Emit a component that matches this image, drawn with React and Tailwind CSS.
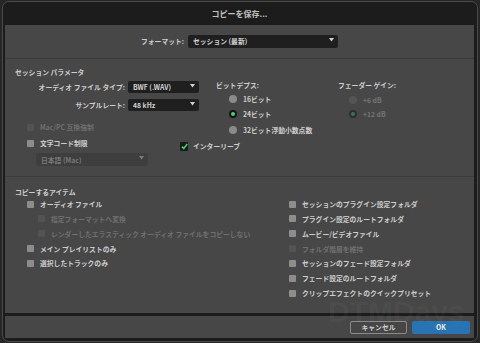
import React from 'react';

function Box({ disabled }) {
  return (
    <span
      className={`block w-[7px] h-[7px] shrink-0 rounded-[1px] ${
        disabled ? 'bg-[#535353]' : 'bg-[#8d8d8d]'
      }`}
    />
  );
}

function CheckItem({ label, disabled, indent }) {
  return (
    <div className={`flex items-center gap-[6px] h-[10px] ${indent ? 'pl-[11px]' : ''}`}>
      <Box disabled={disabled} />
      <span className={`whitespace-nowrap ${disabled ? 'text-[#6f6f6f]' : 'text-[#cecece]'}`}>{label}</span>
    </div>
  );
}

function Arrow() {
  return (
    <svg width="5" height="4" viewBox="0 0 5 4" className="shrink-0 -mt-[3px]">
      <path d="M0 0h5L2.5 3.5z" fill="currentColor" />
    </svg>
  );
}

function Select({ value, disabled, className }) {
  return (
    <div
      className={`flex items-center justify-between pl-[5px] pr-[4px] rounded-[2px] ${
        disabled ? 'bg-[#3e3e3e] text-[#7a7a7a]' : 'bg-[#1f1f1f] text-[#d2d2d2]'
      } ${className}`}
    >
      <span className="whitespace-nowrap">{value}</span>
      <Arrow />
    </div>
  );
}

function Radio({ on, disabled }) {
  if (on) {
    return (
      <span
        className={`flex items-center justify-center w-[8px] h-[8px] rounded-full shrink-0 ${
          disabled ? 'bg-[#2b302d]' : 'bg-[#141414]'
        }`}
      >
        <span className={`block w-[4px] h-[4px] rounded-full ${disabled ? 'bg-[#3d7452]' : 'bg-[#45d271]'}`} />
      </span>
    );
  }
  return (
    <span
      className={`block w-[8px] h-[8px] rounded-full shrink-0 ${disabled ? 'bg-[#555555]' : 'bg-[#8a8a8a]'}`}
    />
  );
}

function RadioItem({ label, on, disabled, className }) {
  return (
    <div className={`flex items-center gap-[6px] h-[10px] ${className}`}>
      <Radio on={on} disabled={disabled} />
      <span className={`whitespace-nowrap ${disabled ? 'text-[#747474]' : 'text-[#cecece]'}`}>{label}</span>
    </div>
  );
}

export default function App() {
  return (
    <div className="w-[480px] h-[343px] bg-[#272727] pt-[1px] pb-[1px] px-[2px] font-[family-name:'Noto_Sans_CJK_JP','Liberation_Sans',sans-serif] font-bold text-[6.8px] leading-[10px] text-[#cecece]">
      <div className="relative h-full rounded-[7px] border border-[#4a4a4a] bg-[#1c1c1c] flex flex-col pl-[2px] pr-[3px] pb-[3px] overflow-hidden">
        {/* Title bar */}
        <div className="h-[23px] shrink-0 flex items-center justify-center text-[8px] text-[#c0c0c0]">
          コピーを保存...
        </div>

        {/* Main panel */}
        <div className="flex-1 flex flex-col bg-[#474747]">
          {/* Format */}
          <div className="h-[34px] shrink-0 border-b border-[#3b3b3b] flex items-center justify-center gap-[4px] pb-[1px]">
            <span>フォーマット:</span>
            <Select value="セッション (最新)" className="w-[150px] h-[13px]" />
          </div>

          {/* Session parameters */}
          <div className="h-[118px] shrink-0 border-b border-[#3b3b3b] pt-[8px] pl-[10px]">
            <div className="h-[10px]">セッション パラメータ</div>
            <div className="flex items-start mt-[3px]">
              <div className="w-[186px] shrink-0 pt-[1px]">
                <div className="flex items-center gap-[3px] h-[12px]">
                  <span className="w-[110px] text-right whitespace-nowrap">オーディオ ファイル タイプ:</span>
                  <Select value="BWF (.WAV)" className="w-[71px] h-[12px]" />
                </div>
                <div className="flex items-center gap-[3px] h-[12px] mt-[6px]">
                  <span className="w-[110px] text-right whitespace-nowrap">サンプルレート:</span>
                  <Select value="48 kHz" className="w-[71px] h-[12px]" />
                </div>
                <div className="pl-[12px] mt-[11px]">
                  <CheckItem label="Mac/PC 互換強制" disabled />
                </div>
              </div>
              <div className="w-[122px] shrink-0 ml-[15px]">
                <div className="h-[10px]">ビットデプス:</div>
                <RadioItem label="16ビット" className="pl-[13px] mt-[4px]" />
                <RadioItem label="24ビット" on className="pl-[13px] mt-[5px]" />
                <RadioItem label="32ビット浮動小数点数" className="pl-[13px] mt-[6px]" />
              </div>
              <div className="shrink-0">
                <div className="h-[10px]">フェーダー ゲイン:</div>
                <RadioItem label="+6 dB" disabled className="pl-[11px] mt-[5px]" />
                <RadioItem label="+12 dB" on disabled className="pl-[11px] mt-[4px]" />
              </div>
            </div>
            <div className="flex items-start mt-[3px]">
              <div className="w-[165px] shrink-0 pl-[12px]">
                <CheckItem label="文字コード制限" />
              </div>
              <div className="flex items-center gap-[5px] h-[10px] mt-[3px]">
                <span className="flex items-center justify-center w-[8px] h-[9px] bg-[#1a1a1a] rounded-[1px] shrink-0">
                  <svg width="7" height="7" viewBox="0 0 7 7">
                    <path d="M1 3.6L2.8 5.6L6.2 1" stroke="#43cf6e" strokeWidth="1.6" fill="none" />
                  </svg>
                </span>
                <span className="whitespace-nowrap">インターリーブ</span>
              </div>
            </div>
            <Select value="日本語 (Mac)" disabled className="w-[112px] h-[13px] ml-[21px] mt-[2px]" />
          </div>

          {/* Items to copy */}
          <div className="flex-1 pt-[10px] pl-[10px]">
            <div className="h-[10px]">コピーするアイテム</div>
            <div className="flex mt-[2px]">
              <div className="w-[274px] shrink-0 pl-[12px] flex flex-col gap-[4.85px]">
                <CheckItem label="オーディオ ファイル" />
                <CheckItem label="指定フォーマットへ変換" disabled indent />
                <CheckItem label="レンダーしたエラスティック オーディオ ファイルをコピーしない" disabled indent />
                <CheckItem label="メイン プレイリストのみ" />
                <CheckItem label="選択したトラックのみ" />
              </div>
              <div className="flex flex-col gap-[4.85px]">
                <CheckItem label="セッションのプラグイン設定フォルダ" />
                <CheckItem label="プラグイン設定のルートフォルダ" />
                <CheckItem label="ムービー/ビデオファイル" />
                <CheckItem label="フォルダ階層を維持" disabled />
                <CheckItem label="セッションのフェード設定フォルダ" />
                <CheckItem label="フェード設定のルートフォルダ" />
                <CheckItem label="クリップエフェクトのクイックプリセット" />
              </div>
            </div>
          </div>
        </div>

        <div className="h-[3px] shrink-0" />

        {/* Footer */}
        <div className="h-[22px] shrink-0 bg-[#474747] flex items-end justify-end gap-[5px] pr-[4px] pb-[4px]">
          <button className="w-[57px] h-[13px] rounded-[2px] border border-[#8a8a8a] bg-[#464646] text-[#d0d0d0] text-[6.8px] leading-none font-bold">
            キャンセル
          </button>
          <button className="w-[58px] h-[13px] rounded-[2px] bg-[#2674b3] text-[#f0f0f0] text-[6.8px] leading-none font-bold">
            OK
          </button>
        </div>

        {/* Watermark */}
        <div className="absolute left-[325px] top-[292px] font-['Liberation_Sans',sans-serif] text-[30px] leading-[36px] font-bold text-white/[0.04] pointer-events-none">
          DTMDays
        </div>
      </div>
    </div>
  );
}
